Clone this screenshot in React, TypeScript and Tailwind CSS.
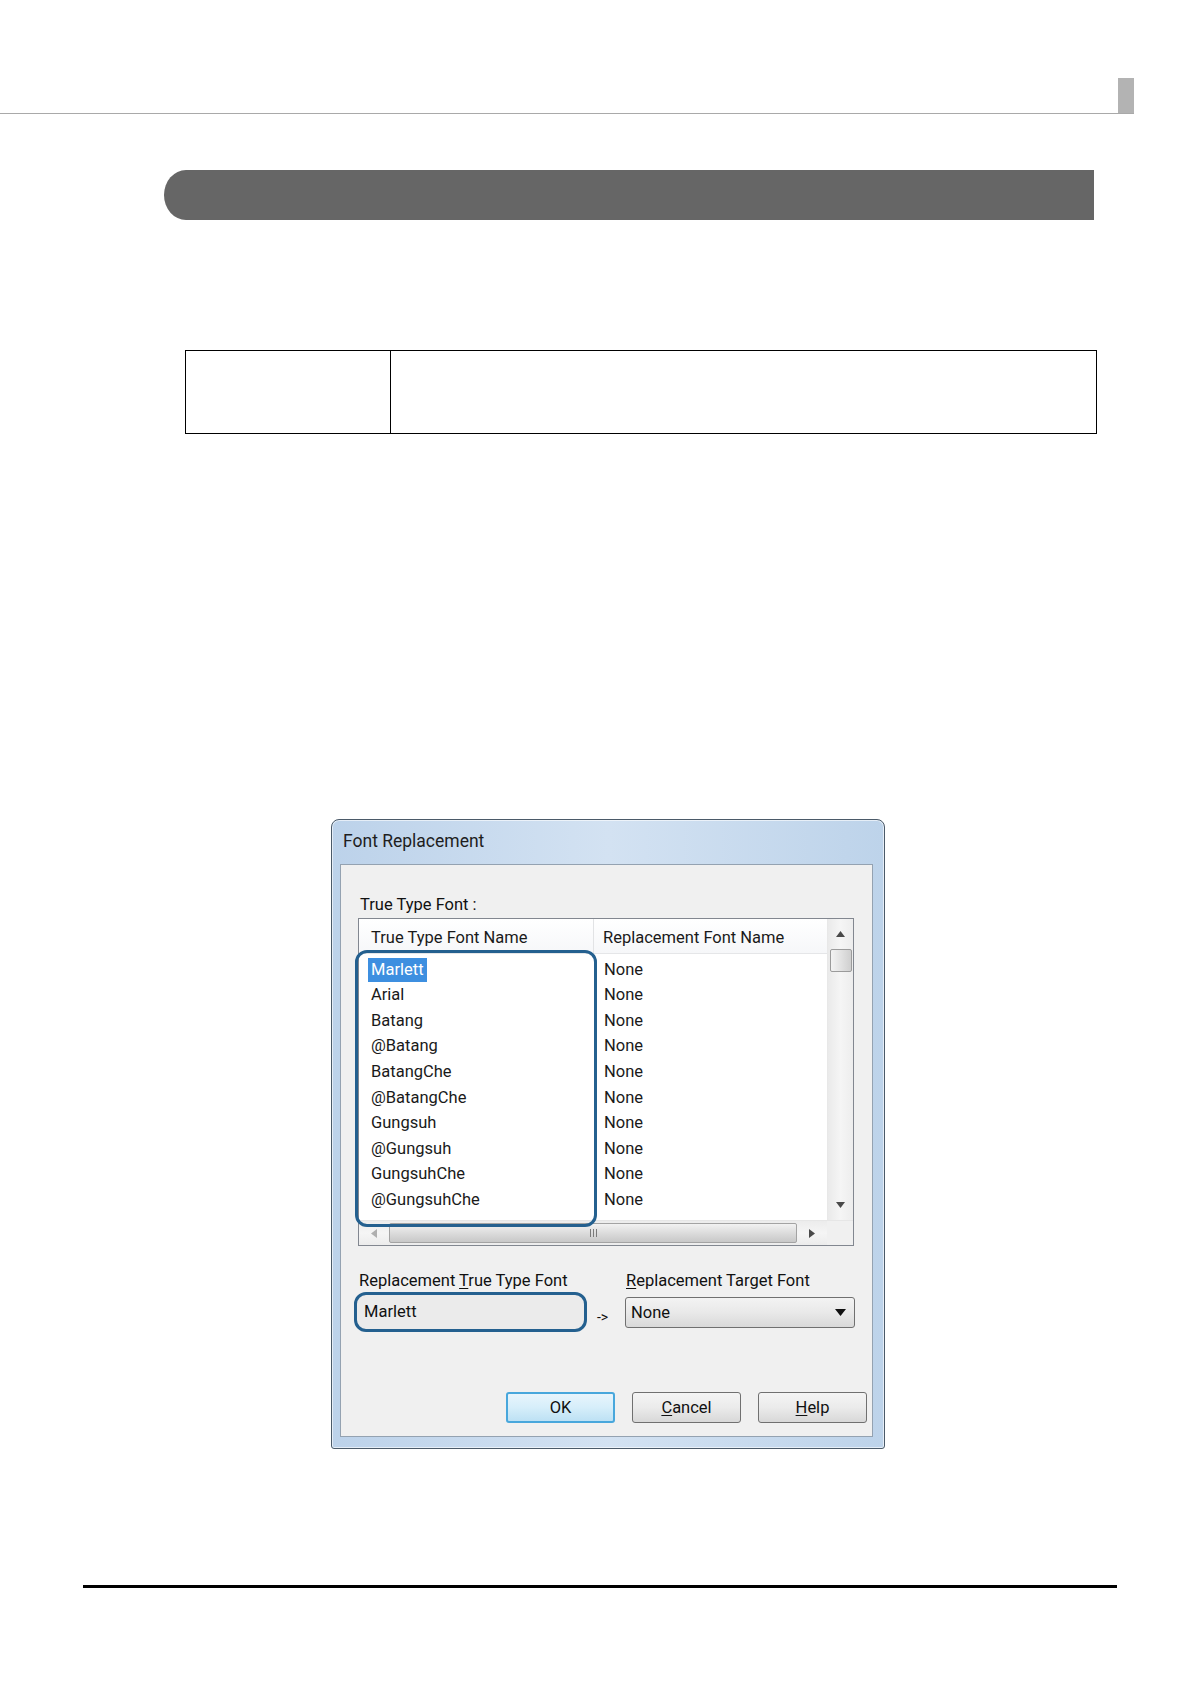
import React from "react";

const leftNames = [
  "Marlett",
  "Arial",
  "Batang",
  "@Batang",
  "BatangChe",
  "@BatangChe",
  "Gungsuh",
  "@Gungsuh",
  "GungsuhChe",
  "@GungsuhChe",
];

function Tri({ dir, className }: { dir: "up" | "down" | "left" | "right"; className?: string }) {
  const pts: Record<string, string> = {
    up: "0,6 4.5,0 9,6",
    down: "0,0 9,0 4.5,6",
    left: "6,0 6,9 0,4.5",
    right: "0,0 6,4.5 0,9",
  };
  const vertical = dir === "up" || dir === "down";
  return (
    <svg
      width={vertical ? 9 : 6}
      height={vertical ? 6 : 9}
      viewBox={vertical ? "0 0 9 6" : "0 0 6 9"}
      className={className}
    >
      <polygon points={pts[dir]} fill="#4a4a4a" />
    </svg>
  );
}

function ListBox() {
  return (
    <div className="relative ml-[17px] mt-[3px] w-[496px] h-[328px] border border-[#828790] bg-white flex flex-col">
      <div className="flex flex-1 min-h-0">
        <div className="flex-1 flex flex-col">
          <div className="h-[35px] flex bg-gradient-to-b from-white to-[#f6f7f9] border-b border-[#e5e6e8]">
            <div className="w-[235px] border-r border-[#e2e3e5] pl-[12px] pt-[3px] flex items-center text-[#1a1a1a]">
              True Type Font Name
            </div>
            <div className="flex-1 pl-[9px] pt-[3px] flex items-center text-[#1a1a1a]">Replacement Font Name</div>
          </div>
          <div className="pt-[3px] flex flex-col">
            {leftNames.map((n, i) => (
              <div key={n} className="h-[25.55px] flex items-center text-[#1a1a1a]">
                <div className="w-[235px] pl-[9px] flex items-center">
                  {i === 0 ? (
                    <span className="h-[24px] px-[3px] flex items-center bg-[#3d8fe0] text-white">{n}</span>
                  ) : (
                    <span className="px-[3px]">{n}</span>
                  )}
                </div>
                <div className="flex-1 pl-[10px]">None</div>
              </div>
            ))}
          </div>
        </div>
        {/* vertical scrollbar */}
        <div className="w-[26px] bg-gradient-to-r from-[#eaeaea] via-[#f5f5f5] to-[#ededed] border-l border-[#e8e8e8] flex flex-col items-center">
          <div className="h-[30px] flex items-center justify-center">
            <Tri dir="up" />
          </div>
          <div className="w-[22px] h-[23px] border border-[#9b9b9b] rounded-[2px] bg-gradient-to-r from-[#f3f3f3] via-[#e2e2e2] to-[#cfcfcf]" />
          <div className="flex-1" />
          <div className="h-[30px] flex items-center justify-center">
            <Tri dir="down" />
          </div>
        </div>
      </div>
      {/* horizontal scrollbar */}
      <div className="h-[25px] flex bg-gradient-to-b from-[#ececec] via-[#f5f5f5] to-[#ececec] border-t border-[#e6e6e6]">
        <div className="w-[30px] flex items-center justify-center">
          <Tri dir="left" className="opacity-40" />
        </div>
        <div className="w-[408px] my-[2px] border border-[#a3a3a3] rounded-[2px] bg-gradient-to-b from-[#f2f2f2] via-[#dcdcdc] to-[#c8c8c8] flex items-center justify-center gap-[2px]">
          <div className="w-px h-[8px] bg-[#7a7a7a]" />
          <div className="w-px h-[8px] bg-[#7a7a7a]" />
          <div className="w-px h-[8px] bg-[#7a7a7a]" />
        </div>
        <div className="w-[30px] flex items-center justify-center">
          <Tri dir="right" />
        </div>
        <div className="flex-1 bg-[#f0f0f0]" />
      </div>
      {/* annotation ring */}
      <div className="absolute left-[-4px] top-[31px] w-[242px] h-[277px] border-[3px] border-[#24608f] rounded-[12px] pointer-events-none" />
    </div>
  );
}

function Button({ children, primary }: { children: React.ReactNode; primary?: boolean }) {
  return (
    <div
      className={
        primary
          ? "w-[109px] h-[31px] rounded-[3px] border-2 border-[#48a7dc] bg-gradient-to-b from-[#e8f5fc] via-[#d6eefa] to-[#bde1f4] flex items-center justify-center text-[#111]"
          : "w-[109px] h-[31px] rounded-[3px] border border-[#707070] bg-gradient-to-b from-[#f4f4f4] via-[#ebebeb] to-[#d8d8d8] flex items-center justify-center text-[#111]"
      }
    >
      {children}
    </div>
  );
}

function Dialog() {
  return (
    <div className="ml-[331px] mt-[385px] w-[554px] h-[630px] rounded-t-[8px] rounded-b-[3px] border border-[#4b5a69] bg-gradient-to-r from-[#bcd2ea] via-[#d3e2f2] to-[#bdd3ea] shadow-[inset_0_0_0_1px_rgba(255,255,255,0.6)] flex flex-col text-[16.5px] leading-[20px] font-['Roboto','Liberation_Sans',sans-serif]">
      <div className="pt-[11px] pl-[11px] h-[31px] text-[17.5px] text-[#1e1e1e]">Font Replacement</div>
      <div className="mt-[13px] ml-[8px] w-[533px] h-[573px] border border-[#94a2b1] bg-[#f0f0f0] flex flex-col">
        <div className="pt-[30px] pl-[19px] text-[#111]">True Type Font :</div>
        <ListBox />
        <div className="mt-[25px] pl-[13px] flex text-[#111]">
          <div className="w-[233px] flex flex-col">
            <div className="pl-[5px] h-[20px]">
              Replacement <span className="underline underline-offset-2">T</span>rue Type Font
            </div>
            <div className="mt-[1px] h-[40px] border-[3px] border-[#24608f] rounded-[12px] bg-[#ebebeb] flex items-center pl-[7px]">
              Marlett
            </div>
          </div>
          <div className="w-[38px] pt-[36px] pl-[10px] text-[14px]">-&gt;</div>
          <div className="w-[230px] flex flex-col">
            <div className="pl-[1px] h-[20px]">
              <span className="underline underline-offset-2">R</span>eplacement Target Font
            </div>
            <div className="mt-[6px] h-[31px] rounded-[3px] border border-[#707070] bg-gradient-to-b from-[#f3f3f3] via-[#e9e9e9] to-[#d9d9d9] flex items-center justify-between pl-[5px] pr-[8px]">
              <span>None</span>
              <svg width="11" height="7" viewBox="0 0 11 7">
                <polygon points="0,0 11,0 5.5,7" fill="#111" />
              </svg>
            </div>
          </div>
        </div>
        <div className="mt-[60px] pr-[5px] flex justify-end gap-[17px]">
          <Button primary>OK</Button>
          <Button>
            <span>
              <span className="underline underline-offset-2">C</span>ancel
            </span>
          </Button>
          <Button>
            <span>
              <span className="underline underline-offset-2">H</span>elp
            </span>
          </Button>
        </div>
      </div>
    </div>
  );
}

export default function App() {
  return (
    <div className="w-[1190px] h-[1684px] bg-white flex flex-col overflow-hidden">
      <div className="pt-[78px] w-[1134px] flex justify-end">
        <div className="w-[16px] h-[35px] bg-[#b3b3b3]" />
      </div>
      <div className="w-[1134px] h-px bg-[#a9a9a9]" />
      <div className="ml-[164px] mt-[56px] w-[930px] h-[50px] bg-[#666666] rounded-tl-[22px_25px] rounded-bl-[22px_25px]" />
      <div className="ml-[185px] mt-[130px] w-[912px] h-[84px] border-[1.5px] border-black grid grid-cols-[205px_1fr]">
        <div className="border-r border-black" />
        <div />
      </div>
      <Dialog />
      <div className="ml-[83px] mt-[136px] w-[1034px] h-[3px] bg-black" />
    </div>
  );
}
